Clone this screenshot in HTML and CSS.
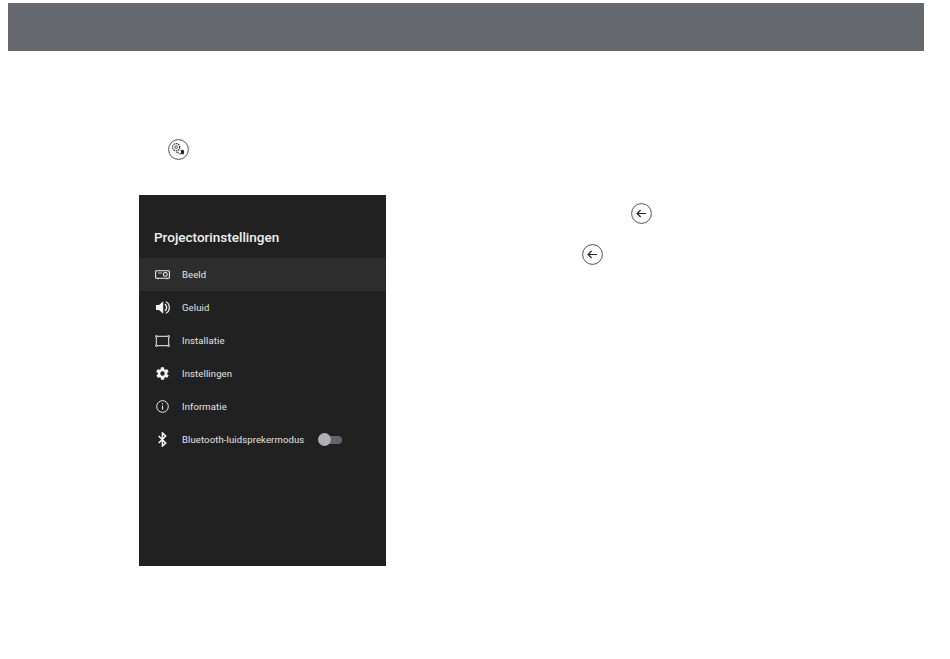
FILE: index.html
```html
<!DOCTYPE html>
<html lang="nl">
<head>
<meta charset="utf-8">
<title>Projectorinstellingen</title>
<link rel="stylesheet" href="styles.css">
</head>
<body>
<header class="banner"></header>
<main class="content">
  <section class="left">
    <div class="remote-icon">
      <svg width="21" height="21" viewBox="0 0 21 21" fill="none" stroke="#222" stroke-width="0.8">
        <circle cx="10.5" cy="10.5" r="9.9"/>
        <circle cx="8.2" cy="8.2" r="3.6" stroke-dasharray="1.6 0.7" stroke-width="1.1"/>
        <circle cx="8.2" cy="8.2" r="1.3"/>
        <path d="M8 13.2h2.2c.3 1.2 1 1.6 1.6 1.6h3.7v-3.4h-3.2"/>
        <rect x="13" y="11.4" width="2.8" height="3.4" fill="#222" stroke="none"/>
      </svg>
    </div>
    <nav class="panel">
      <h1 class="panel-title">Projectorinstellingen</h1>
      <ul class="menu">
        <li class="item selected">
          <span class="item-icon">
            <svg width="15" height="10" viewBox="0 0 15 10" fill="none" stroke="#eee" stroke-width="1.1">
              <path d="M2 8.2H1.4Q.6 8.2.6 7.4V1.5Q.6.7 1.4.7h12.2q.8 0 .8.8v5.9q0 .8-.8.8H13M2 8.2h11M3 8.2v1M12 8.2v1"/>
              <circle cx="10.3" cy="4.4" r="1.9"/>
              <path d="M3 3h4" stroke-width=".8"/>
            </svg>
          </span>
          <span class="label">Beeld</span>
        </li>
        <li class="item">
          <span class="item-icon">
            <svg width="14" height="13" viewBox="0 0 14 13" fill="none">
              <path d="M0 4h3L7.2.2v12.6L3 9H0z" fill="#f2f2f2"/>
              <path d="M8.8 3.2c2.4 1 2.4 5.6 0 6.6" stroke="#f2f2f2" stroke-width="1.4"/>
              <path d="M9.8.8c4.6 1.6 4.6 9.8 0 11.4" stroke="#f2f2f2" stroke-width="1.2"/>
            </svg>
          </span>
          <span class="label">Geluid</span>
        </li>
        <li class="item">
          <span class="item-icon">
            <svg width="15" height="12" viewBox="0 0 15 12" fill="none" stroke="#eee" stroke-width="1">
              <path d="M2 1.3h11M2 10.7h11M1.3 2v8M13.7 2v8"/>
              <circle cx="1.4" cy="1.3" r=".9"/><circle cx="13.6" cy="1.3" r=".9"/>
              <circle cx="1.4" cy="10.7" r=".9"/><circle cx="13.6" cy="10.7" r=".9"/>
            </svg>
          </span>
          <span class="label">Installatie</span>
        </li>
        <li class="item">
          <span class="item-icon">
            <svg width="15" height="15" viewBox="0 0 24 24">
              <path fill="#f4f4f4" fill-rule="evenodd" d="M19.4 13a7.6 7.6 0 0 0 0-2l2.1-1.6a.5.5 0 0 0 .1-.6l-2-3.5a.5.5 0 0 0-.6-.2l-2.5 1a7.3 7.3 0 0 0-1.7-1l-.4-2.7a.5.5 0 0 0-.5-.4h-4a.5.5 0 0 0-.5.4l-.4 2.7a7.7 7.7 0 0 0-1.7 1l-2.5-1a.5.5 0 0 0-.6.2l-2 3.5a.5.5 0 0 0 .1.6L4.6 11a7.6 7.6 0 0 0 0 2l-2.1 1.6a.5.5 0 0 0-.1.6l2 3.5c.1.2.4.3.6.2l2.5-1c.5.4 1.1.7 1.7 1l.4 2.7c0 .2.2.4.5.4h4c.3 0 .5-.2.5-.4l.4-2.7c.6-.3 1.2-.6 1.7-1l2.5 1c.2.1.5 0 .6-.2l2-3.5a.5.5 0 0 0-.1-.6zM12 15.5a3.5 3.5 0 1 1 0-7 3.5 3.5 0 0 1 0 7z"/>
            </svg>
          </span>
          <span class="label">Instellingen</span>
        </li>
        <li class="item">
          <span class="item-icon">
            <svg width="13" height="13" viewBox="0 0 13 13" fill="none" stroke="#eee">
              <circle cx="6.5" cy="6.5" r="5.8" stroke-width="1"/>
              <path d="M6.5 5.6v4" stroke-width="1.1"/>
              <path d="M6.5 3.2v1.2" stroke-width="1.1"/>
            </svg>
          </span>
          <span class="label">Informatie</span>
        </li>
        <li class="item">
          <span class="item-icon">
            <svg width="9" height="15" viewBox="0 0 9 15" fill="none" stroke="#f4f4f4" stroke-width="1.5">
              <path d="M.7 4l7 6.9-3.3 3.2V.9l3.3 3.2-7 6.9"/>
            </svg>
          </span>
          <span class="label">Bluetooth-luidsprekermodus</span>
          <span class="toggle"><span class="knob"></span></span>
        </li>
      </ul>
    </nav>
  </section>
  <section class="right">
    <div class="back back-first">
      <svg class="back-icon" width="21" height="21" viewBox="0 0 21 21" fill="none" stroke="#222">
        <circle cx="10.5" cy="10.5" r="9.9" stroke-width=".8"/>
        <path d="M15 10.5H6.4M9.6 7l-3.5 3.5 3.5 3.5" stroke-width="1.2"/>
      </svg>
    </div>
    <div class="back back-second">
      <svg class="back-icon" width="21" height="21" viewBox="0 0 21 21" fill="none" stroke="#222">
        <circle cx="10.5" cy="10.5" r="9.9" stroke-width=".8"/>
        <path d="M15 10.5H6.4M9.6 7l-3.5 3.5 3.5 3.5" stroke-width="1.2"/>
      </svg>
    </div>
  </section>
</main>
</body>
</html>
```
FILE: styles.css
```css
* { box-sizing: border-box; }
html, body { margin: 0; padding: 0; background: #fff; }
body { width: 950px; height: 659px; overflow: hidden; font-family: Roboto, "Liberation Sans", sans-serif; }

.banner {
  height: 48px;
  margin: 3px 26px 0 8px;
  background: #666870;
}

.content { display: flex; }

.left { width: 247px; margin-left: 139px; }

.remote-icon {
  height: 21px;
  margin: 88px 0 35px 29px;
  display: flex;
}

.panel {
  height: 371px;
  background: #212121;
  color: #eee;
}

.panel-title {
  margin: 0;
  height: 63px;
  padding: 33px 0 0 15px;
  font-size: 13.5px;
  line-height: 18px;
  font-weight: 500;
  color: #f0f0f0;
}

.menu { list-style: none; margin: 0; padding: 0; }

.item {
  height: 33px;
  display: flex;
  align-items: center;
  padding-left: 16px;
  font-size: 9.5px;
}

.selected { background: #2d2d2e; }

.item-icon {
  width: 15px;
  margin-right: 12px;
  display: flex;
  justify-content: center;
  align-items: center;
}

.label { color: #e4e4e4; letter-spacing: .12px; }

.toggle {
  position: relative;
  width: 22px;
  height: 8px;
  margin-left: 16px;
  border-radius: 4px;
  background: #62656d;
}

.knob {
  position: absolute;
  left: -2px;
  top: -2.5px;
  width: 13px;
  height: 13px;
  border-radius: 50%;
  background: #b0b0b3;
}

.right { flex: 1; }

.back { display: flex; height: 21px; }
.back-first { margin: 152px 0 0 245px; }
.back-second { margin: 20px 0 0 196px; }
```
